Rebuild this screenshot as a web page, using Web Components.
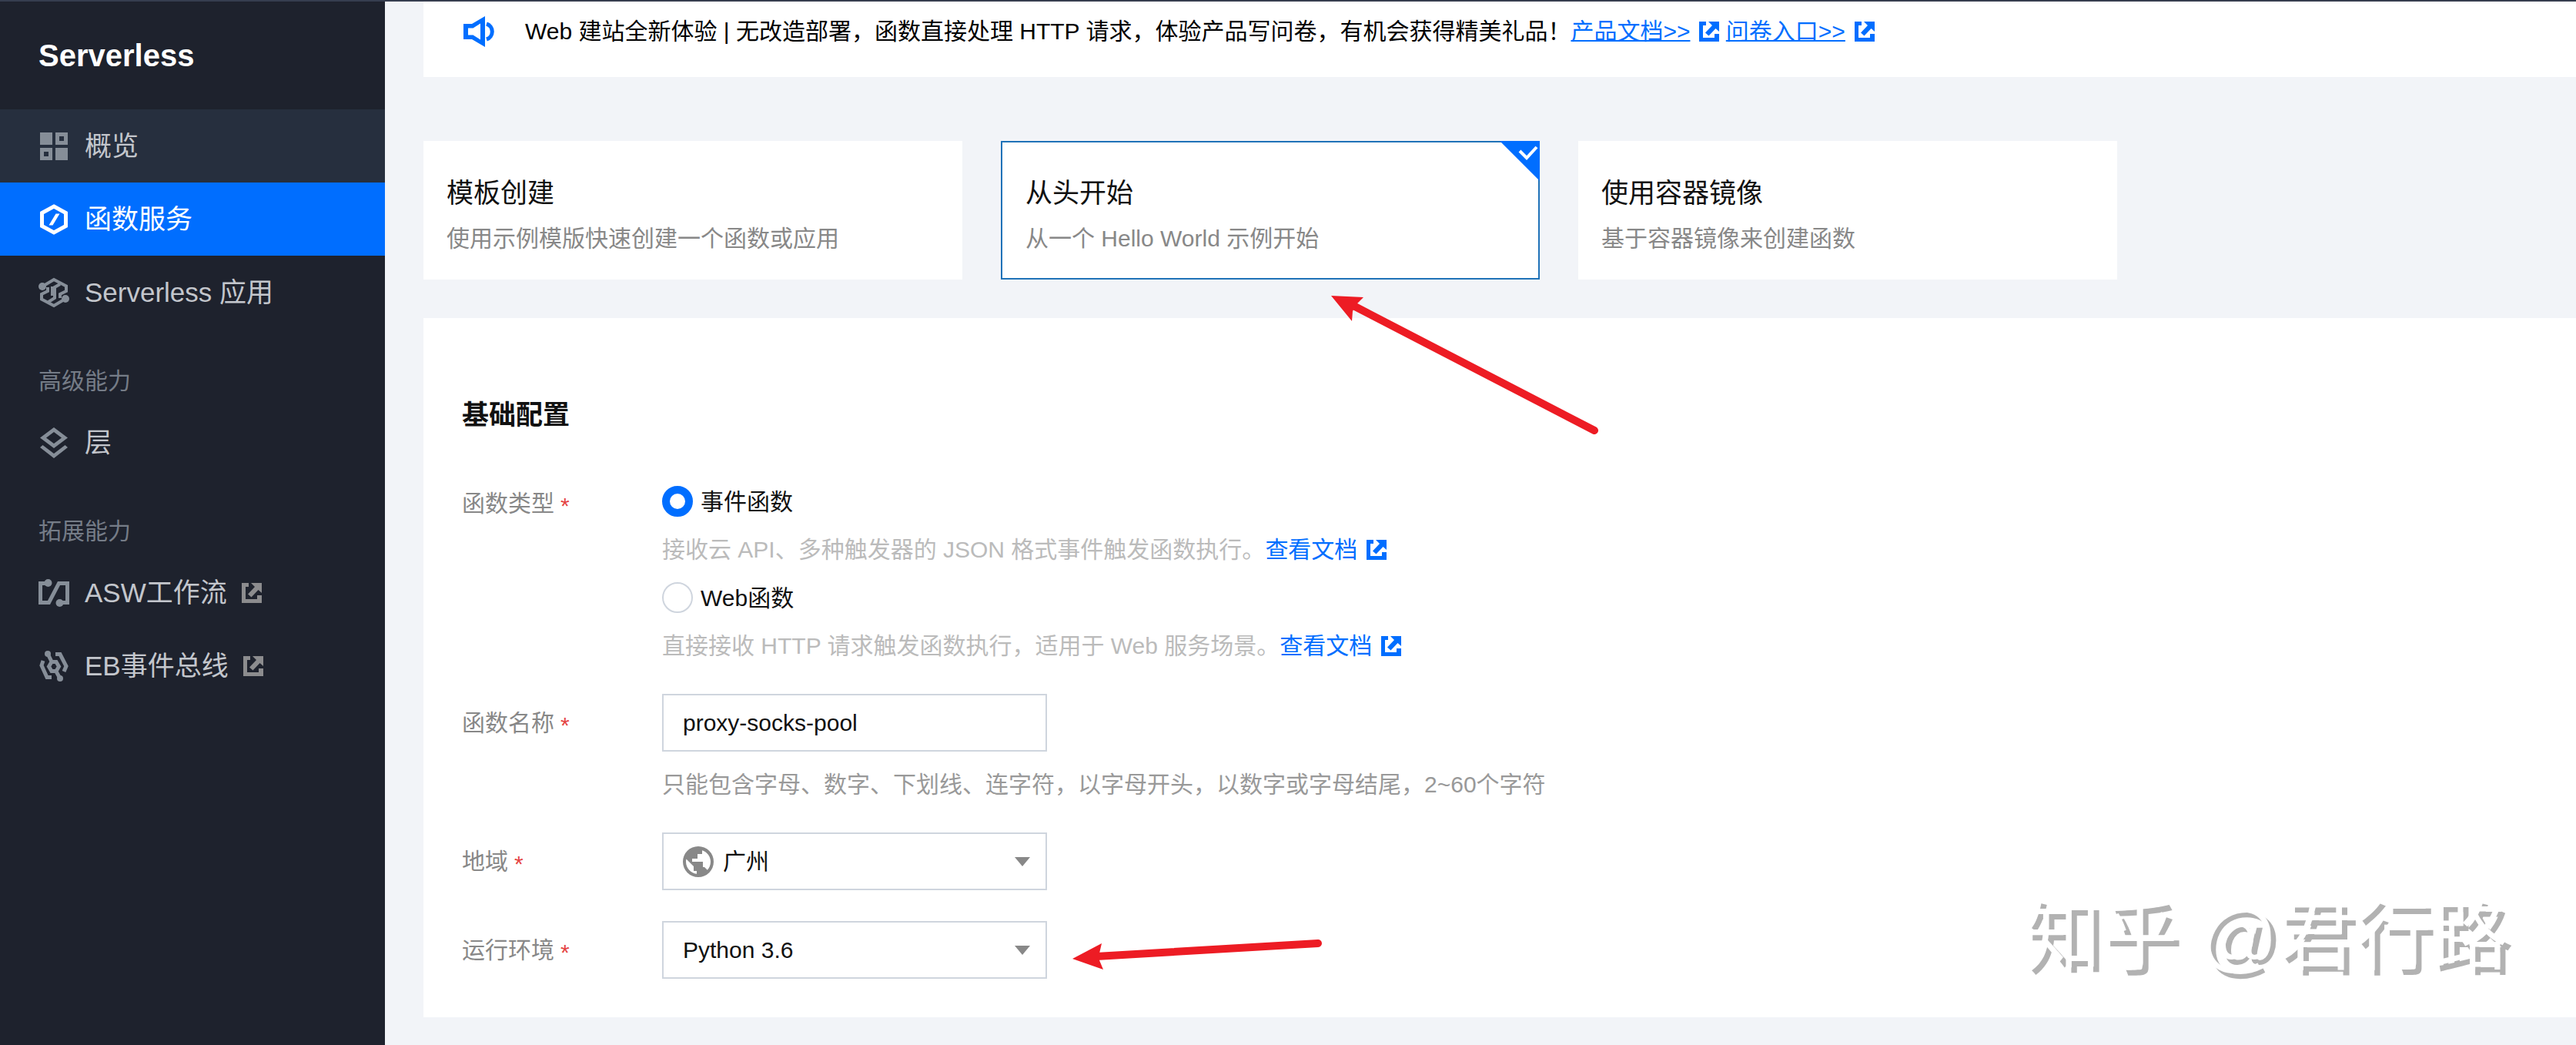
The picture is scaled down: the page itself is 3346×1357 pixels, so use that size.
<!DOCTYPE html>
<html lang="zh-CN">
<head>
<meta charset="utf-8">
<title>Serverless</title>
<style>
body{
  margin: 0;
  font-family: "Liberation Sans", "Noto Sans CJK SC", sans-serif;
  font-size: 30px;
  line-height: 45px;
  color: #000;
  background-color: #f2f4f8;
}
</style>
</head>
<body>
<console-page>
  <side-nav slot="nav" heading="Serverless">
    <nav-item icon="overview" state="hover">概览</nav-item>
    <nav-item icon="function" state="active">函数服务</nav-item>
    <nav-item icon="app">Serverless 应用</nav-item>
    <nav-group>高级能力</nav-group>
    <nav-item icon="layer">层</nav-item>
    <nav-group>拓展能力</nav-group>
    <nav-item icon="workflow" external>ASW工作流</nav-item>
    <nav-item icon="eventbus" external>EB事件总线</nav-item>
  </side-nav>

  <notice-bar>Web 建站全新体验 | 无改造部署，函数直接处理 HTTP 请求，体验产品写问卷，有机会获得精美礼品！<doc-link underline>产品文档&gt;&gt;</doc-link> <doc-link underline>问卷入口&gt;&gt;</doc-link></notice-bar>

  <card-list>
    <create-card heading="模板创建">使用示例模版快速创建一个函数或应用</create-card>
    <create-card heading="从头开始" selected>从一个 Hello World 示例开始</create-card>
    <create-card heading="使用容器镜像">基于容器镜像来创建函数</create-card>
  </card-list>

  <config-panel heading="基础配置">
    <type-field label="函数类型" first="事件函数" second="Web函数">
      <span slot="first">接收云 API、多种触发器的 JSON 格式事件触发函数执行。<doc-link>查看文档</doc-link></span>
      <span slot="second">直接接收 HTTP 请求触发函数执行，适用于 Web 服务场景。<doc-link>查看文档</doc-link></span>
    </type-field>
    <text-field label="函数名称" value="proxy-socks-pool">只能包含字母、数字、下划线、连字符，以字母开头，以数字或字母结尾，2~60个字符</text-field>
    <select-field label="地域" value="广州" icon="globe"></select-field>
    <select-field label="运行环境" value="Python 3.6"></select-field>
  </config-panel>

  <mark-arrow style="left: 1720px; top: 376px" width="360" height="192"
    line="40,22 351,183" head="9,8 51,10 42,19 37,28 36,41"></mark-arrow>
  <mark-arrow style="left: 1384px; top: 1210px" width="340" height="60"
    line="40,32 328,15" head="9,35 47,15 44,28 44,37 49,49"></mark-arrow>
  <page-watermark>知乎 @君行路</page-watermark>
</console-page>

<script>
// Shapes of the icons, all drawn in a 40 x 40 box
const icons = {
  overview: `<path fill-rule="evenodd" d="M2 2h16v16H2zM22 2h16v16H22zM27 7v6h6V7zM2 22h16v16H2zM7 27v6h6v-6zM22 22h16v16H22z"/>`,
  function: `<path d="M20 3L35.5 11.5V28.5L20 37L4.5 28.5V11.5Z" fill="none" stroke="currentColor" stroke-width="5"/><path d="M22.5 12.5H27.5L18.5 27.5H13.5Z"/>`,
  app: `<g fill="none" stroke="currentColor" stroke-width="4"><path d="M5 12L20 3L36 11.5V18L28 22V27"/><path d="M35 28L20 37L4 28.5V22L12 18V13"/><path d="M28 9L21 13V27L13 32"/><path d="M18 12V24"/></g><circle cx="5" cy="12" r="5"/><circle cx="35" cy="28" r="5"/>`,
  layer: `<path fill-rule="evenodd" d="M20 0L38 13.5L20 27L2 13.5ZM20 6L10 13.5L20 21L30 13.5Z"/><path d="M2 26L5.5 23L20 34L34.5 23L38 26L20 40Z"/>`,
  workflow: `<path d="M12 7.5H2.5V32.5H13.5L26.5 7.5H37.5V32.5H28" fill="none" stroke="currentColor" stroke-width="5"/><circle cx="12.5" cy="7" r="5"/><circle cx="27.5" cy="33" r="5"/>`,
  eventbus: `<g fill="none" stroke="currentColor" stroke-width="5"><path d="M17 14.5H23L26.5 20.5L23 26.5H17L13.5 20.5Z"/><path d="M12 4L17 14M23 27L28 36"/><path d="M6 13L4 19L11 34.5H17"/><path d="M22 4.5H28L36 20L33 27"/></g><circle cx="12" cy="4" r="4"/><circle cx="28" cy="36" r="4"/>`,
  notice: `<path fill-rule="evenodd" d="M0 10H11L28 0V40L11 30H0ZM6 15.5V24.5H12.5L22 30.5V9.5L12.5 15.5Z"/><path d="M30 10A10.5 10.5 0 0 1 30 30" fill="none" stroke="currentColor" stroke-width="5"/>`,
  globe: `<path transform="scale(2) translate(-2 -2)" d="M12 2a10 10 0 1 0 0 20a10 10 0 1 0 0-20zM11 19.9C7 19.4 4 16 4 12c0-.6.1-1.2.2-1.8L9 15v3h2zM17.9 17.4L16 15.5h-1V12H8v-2h3.5V7H14.5V4.6C17.9 5.8 20 8.6 20 12c0 2.1-.8 4-2.1 5.4z"/>`
};

function Icon(name){
  return `<svg class="icon" width="40" height="40" viewBox="0 0 40 40" fill="currentColor" aria-hidden="true">${icons[name]}</svg>`;
}

const external_icon = `<svg class="external" width="26" height="26" viewBox="0 0 26 26" fill="currentColor" aria-hidden="true">
  <path d="M0 0H9V5H5V21H20V16H26V26H0Z"/><path d="M12 0H26V13L21.5 9L12.5 18.5L8 14.5L17 5Z"/></svg>`;

// Base class - open a shadow root and fill it from the string of the subclass
class ConsoleElement extends HTMLElement{
  connectedCallback(){
    if(this.shadowRoot)
      return;
    const template = document.createElement('template');
    template.innerHTML = this.render();
    this.attachShadow({mode:"open"}).appendChild(template.content.cloneNode(true));
  }
  attr(name){
    return this.getAttribute(name) || "";
  }
}

// Page frame: nav on the left, content on the right
class ConsolePage extends ConsoleElement{
  render(){
    return `
<style>
:host{
  display: flex;
  position: relative;
  box-sizing: border-box;
  min-height: 100vh;
  border-top: 2px solid #363d4f;
  overflow: hidden;
}
main{
  flex: 1;
  min-width: 0;
  padding: 0 0 36px 50px;
}
</style>
<slot name="nav"></slot>
<main><slot></slot></main>`;
  }
}
customElements.define("console-page", ConsolePage);

class SideNav extends ConsoleElement{
  render(){
    return `
<style>
:host{
  display: block;
  flex: 0 0 500px;
  background-color: #1e222d;
}
h1{
  margin: 0;
  padding-left: 50px;
  font-size: 40px;
  line-height: 140px;
  color: #fff;
}
</style>
<h1>${this.attr("heading")}</h1>
<nav><slot></slot></nav>`;
  }
}
customElements.define("side-nav", SideNav);

class NavItem extends ConsoleElement{
  render(){
    return `
<style>
:host{
  display: block;
}
a{
  display: flex;
  align-items: center;
  height: 95px;
  padding-left: 50px;
  font-size: 35px;
  color: #c3c6cc;
  text-decoration: none;
}
.icon{
  margin-right: 20px;
  color: #868e98;
}
.external{
  margin-left: 19px;
  color: #8c8c8e;
}
:host([state="hover"]) a{
  background-color: #262f3e;
}
:host([state="active"]) a{
  background-color: #006eff;
  color: #fff;
}
:host([state="active"]) .icon{
  color: #fff;
}
</style>
<a href="#">${Icon(this.attr("icon"))}<slot></slot>${this.hasAttribute("external") ? external_icon : ""}</a>`;
  }
}
customElements.define("nav-item", NavItem);

class NavGroup extends ConsoleElement{
  render(){
    return `
<style>
:host{
  display: block;
  padding: 45px 50px 10px;
  color: #757c87;
}
</style>
<slot></slot>`;
  }
}
customElements.define("nav-group", NavGroup);

// Link to a page outside of the console
// No line break after the style: it would show as a space before the link
class DocLink extends ConsoleElement{
  render(){
    return `<style>
:host{
  display: inline;
  color: #006eff;
  white-space: nowrap;
}
a{
  color: #006eff;
  text-decoration: none;
}
:host([underline]) a{
  text-decoration: underline;
  text-decoration-thickness: 2px;
}
.external{
  margin-left: 12px;
  vertical-align: -3px;
}
</style><a href="#"><slot></slot></a>${external_icon}`;
  }
}
customElements.define("doc-link", DocLink);

class NoticeBar extends ConsoleElement{
  render(){
    return `
<style>
:host{
  display: flex;
  align-items: flex-start;
  padding: 16px 50px 37px;
  background-color: #fff;
}
.icon{
  flex: none;
  margin: 3px 40px 0 2px;
  color: #006eff;
}
</style>
${Icon("notice")}<div><slot></slot></div>`;
  }
}
customElements.define("notice-bar", NoticeBar);

class CardList extends ConsoleElement{
  render(){
    return `
<style>
:host{
  display: flex;
  gap: 50px;
  padding: 83px 50px 50px 0;
}
</style>
<slot></slot>`;
  }
}
customElements.define("card-list", CardList);

class CreateCard extends ConsoleElement{
  render(){
    return `
<style>
:host{
  display: block;
  position: relative;
  flex: 0 1 700px;
}
button{
  display: block;
  box-sizing: border-box;
  width: 100%;
  height: 180px;
  padding: 40px 30px 30px;
  border: 0;
  background-color: #fff;
  font: inherit;
  text-align: left;
}
:host([selected]) button{
  border: 2px solid #1f72b8;
}
strong, span{
  display: block;
}
strong{
  margin-bottom: 10px;
  font-size: 35px;
  font-weight: normal;
  line-height: 52px;
  color: #111;
}
span{
  color: #888;
}
.corner{
  display: none;
  position: absolute;
  top: 0;
  right: 0;
}
:host([selected]) .corner{
  display: block;
}
</style>
<button type="button" aria-pressed="${this.hasAttribute("selected")}">
  <strong>${this.attr("heading")}</strong>
  <span><slot></slot></span>
</button>
<svg class="corner" width="52" height="52" viewBox="0 0 52 52" aria-hidden="true">
  <path d="M0 0H52V52Z" fill="#006eff"/>
  <path d="M26 13L35 22L48 8" fill="none" stroke="#fff" stroke-width="4"/>
</svg>`;
  }
}
customElements.define("create-card", CreateCard);

class ConfigPanel extends ConsoleElement{
  render(){
    return `
<style>
:host{
  display: block;
  padding: 100px 50px 50px;
  background-color: #fff;
}
h2{
  margin: 0 0 66px;
  font-size: 35px;
  line-height: 52px;
  color: #111;
}
form{
  display: flex;
  flex-direction: column;
  gap: 40px;
}
</style>
<h2>${this.attr("heading")}</h2>
<form><slot></slot></form>`;
  }
}
customElements.define("config-panel", ConfigPanel);

// Styles that every kind of form field uses
const field_style = `
:host{
  display: grid;
  grid-template-columns: 260px 1fr;
}
.name{
  line-height: 75px;
  color: #888;
}
.name i{
  margin-left: 8px;
  font-style: normal;
  line-height: 0;
  color: #e54545;
  vertical-align: -3px;
}
.box{
  display: flex;
  align-items: center;
  box-sizing: border-box;
  width: 500px;
  max-width: 100%;
  height: 75px;
  padding: 0 20px 0 25px;
  border: 2px solid #cfd5de;
}
input, select{
  font: inherit;
  color: #111;
}
.box input, .box select{
  flex: 1;
  min-width: 0;
  height: 100%;
  padding: 0;
  border: 0;
  outline: 0;
  background: none;
  appearance: none;
}`;

// Choice between the two types, with both radios in one root so that they stay a group
class TypeField extends ConsoleElement{
  option(slot, checked){
    return `
<label><input type="radio" name="type" ${checked}>${this.attr(slot)}</label>
<div class="note"><slot name="${slot}"></slot></div>`;
  }
  render(){
    return `
<style>${field_style}
.name{
  line-height: 45px;
}
.options{
  display: grid;
  gap: 20px;
}
label{
  display: flex;
  align-items: center;
  gap: 10px;
  height: 40px;
  color: #111;
}
input{
  box-sizing: border-box;
  width: 40px;
  height: 40px;
  margin: 0;
  border: 2px solid #cfd5de;
  border-radius: 50%;
  background-color: #fff;
  appearance: none;
}
input:checked{
  border: 10px solid #006eff;
}
.note{
  color: #bbb;
}
</style>
<div class="name" id="name">${this.attr("label")}<i>*</i></div>
<div class="options" role="radiogroup" aria-labelledby="name">
  ${this.option("first", "checked")}
  ${this.option("second", "")}
</div>`;
  }
}
customElements.define("type-field", TypeField);

class TextField extends ConsoleElement{
  render(){
    return `
<style>${field_style}
.hint{
  margin-top: 20px;
  color: #999;
}
</style>
<label class="name" for="control">${this.attr("label")}<i>*</i></label>
<div>
  <div class="box"><input id="control" type="text" value="${this.attr("value")}"></div>
  <div class="hint"><slot></slot></div>
</div>`;
  }
}
customElements.define("text-field", TextField);

class SelectField extends ConsoleElement{
  render(){
    return `
<style>${field_style}
.icon{
  margin-right: 12px;
  color: #888;
}
</style>
<label class="name" for="control">${this.attr("label")}<i>*</i></label>
<div class="box">
  ${this.attr("icon") ? Icon(this.attr("icon")) : ""}
  <select id="control"><option>${this.attr("value")}</option></select>
  <svg width="20" height="12" viewBox="0 0 20 12" fill="#888" aria-hidden="true"><path d="M0 0H20L10 12Z"/></svg>
</div>`;
  }
}
customElements.define("select-field", SelectField);

// Red arrow laid over the page
class MarkArrow extends ConsoleElement{
  render(){
    return `
<style>
:host{
  display: block;
  position: absolute;
  margin-top: -2px;
  pointer-events: none;
}
svg{
  display: block;
}
</style>
<svg width="${this.attr("width")}" height="${this.attr("height")}" aria-hidden="true">
  <polyline points="${this.attr("line")}" stroke="#ed1c24" stroke-width="10" stroke-linecap="round"/>
  <polygon points="${this.attr("head")}" fill="#ed1c24"/>
</svg>`;
  }
}
customElements.define("mark-arrow", MarkArrow);

class PageWatermark extends ConsoleElement{
  render(){
    return `
<style>
:host{
  display: block;
  position: absolute;
  right: 88px;
  bottom: 76px;
  font-size: 100px;
  line-height: 130px;
  color: #fff;
  text-shadow: 7px 7px 0 #b2b2b2;
  white-space: nowrap;
  pointer-events: none;
}
</style>
<slot></slot>`;
  }
}
customElements.define("page-watermark", PageWatermark);
</script>
</body>
</html>
